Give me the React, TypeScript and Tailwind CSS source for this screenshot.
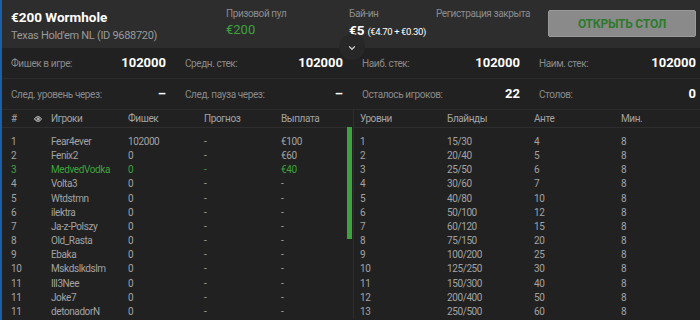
import React from 'react';
import { ChevronDown, Eye } from 'lucide-react';

const stats = [
  [
    ['Фишек в игре:', '102000'],
    ['Средн. стек:', '102000'],
    ['Наиб. стек:', '102000'],
    ['Наим. стек:', '102000'],
  ],
  [
    ['След. уровень через:', '–'],
    ['След. пауза через:', '–'],
    ['Осталось игроков:', '22'],
    ['Столов:', '0'],
  ],
];

const players = [
  ['1', 'Fear4ever', '102000', '-', '€100'],
  ['2', 'Fenix2', '0', '-', '€60'],
  ['3', 'MedvedVodka', '0', '-', '€40'],
  ['4', 'Volta3', '0', '-', '-'],
  ['5', 'Wtdstmn', '0', '-', '-'],
  ['6', 'ilektra', '0', '-', '-'],
  ['7', 'Ja-z-Polszy', '0', '-', '-'],
  ['8', 'Old_Rasta', '0', '-', '-'],
  ['9', 'Ebaka', '0', '-', '-'],
  ['10', 'Mskdslkdslm', '0', '-', '-'],
  ['11', 'Ill3Nee', '0', '-', '-'],
  ['11', 'Joke7', '0', '-', '-'],
  ['11', 'detonadorN', '0', '-', '-'],
];

const levels = [
  ['1', '15/30', '4'],
  ['2', '20/40', '5'],
  ['3', '25/50', '6'],
  ['4', '30/60', '7'],
  ['5', '40/80', '10'],
  ['6', '50/100', '12'],
  ['7', '60/120', '15'],
  ['8', '75/150', '20'],
  ['9', '100/200', '25'],
  ['10', '125/250', '30'],
  ['11', '150/300', '40'],
  ['12', '200/400', '50'],
  ['13', '250/500', '60'],
];

export default function App() {
  return (
    <div
      className="relative w-[700px] h-[320px] overflow-hidden bg-[#212121] border-l-2 border-[#1d5fa6]"
      style={{ fontFamily: 'Roboto, "Liberation Sans", sans-serif' }}
    >
      {/* header */}
      <div className="flex h-[48px] bg-[#2d2d2d] whitespace-nowrap">
        <div className="w-[224px] pl-[9px] pt-[9px]">
          <div className="text-[13.5px] font-bold text-white leading-[16px]">€200 Wormhole</div>
          <div className="text-[11px] tracking-[-0.3px] text-[#9a9a9a] leading-[14px] mt-[4px]">Texas Hold'em NL (ID 9688720)</div>
        </div>
        <div className="w-[123px] pt-[8px]">
          <div className="text-[10px] tracking-[-0.4px] text-[#8c8c8c] leading-[12px]">Призовой пул</div>
          <div className="text-[13px] text-[#3ea33e] leading-[16px] mt-[2px]">€200</div>
        </div>
        <div className="w-[87px] pt-[8px]">
          <div className="text-[10px] tracking-[-0.4px] text-[#8c8c8c] leading-[12px]">Бай-ин</div>
          <div className="leading-[16px] mt-[2px] text-white">
            <span className="text-[13.5px] font-bold">€5</span>
            <span className="text-[9.5px] ml-[3px] tracking-[-0.4px]">(€4.70 + €0.30)</span>
          </div>
        </div>
        <div className="w-[112px] pt-[8px]">
          <div className="text-[10px] tracking-[-0.4px] text-[#8c8c8c] leading-[12px]">Регистрация закрыта</div>
        </div>
        <div className="pt-[10px]">
          <button className="w-[148px] h-[27px] rounded-[2px] bg-[#8a8a8a] border border-[#9a9a9a] text-[12px] tracking-[-0.2px] font-bold text-[#2c7a2e]">
            ОТКРЫТЬ СТОЛ
          </button>
        </div>
      </div>

      {/* stats */}
      {stats.map((row, i) => (
        <div key={i} className="grid grid-cols-[174px_177px_177px_1fr] h-[31px] border-b border-[#2c2c2c] items-center">
          {row.map(([label, value], j) => (
            <div key={j} className={`flex items-center justify-between pl-[9px] ${j === 3 ? 'pr-[4px]' : 'pr-[10px]'}`}>
              <span className="text-[10px] tracking-[-0.4px] text-[#8a8a8a]">{label}</span>
              <span className="text-[13px] font-bold text-white">{value}</span>
            </div>
          ))}
        </div>
      ))}

      {/* tables */}
      <div className="flex">
        <div className="w-[345px] relative">
          <div className="grid grid-cols-[40px_77px_76px_77px_1fr] pl-[9px] h-[18px] items-center border-b border-[#2e2e2e] text-[10px] tracking-[-0.4px] text-[#a3a3a3]">
            <div className="flex items-center">
              <span>#</span>
              <Eye className="w-[8px] h-[8px] ml-auto mr-[9px] text-[#cfcfcf]" strokeWidth={3} />
            </div>
            <div>Игроки</div>
            <div>Фишек</div>
            <div>Прогноз</div>
            <div>Выплата</div>
          </div>
          <div className="pt-[6px]">
            {players.map((p, i) => (
              <div
                key={i}
                className={`grid grid-cols-[40px_77px_76px_77px_1fr] pl-[9px] h-[14.17px] items-center text-[10px] tracking-[-0.4px] ${
                  i === 2 ? 'text-[#3ea33e]' : 'text-[#a3a3a3]'
                }`}
              >
                {p.map((c, j) => (
                  <div key={j}>{c}</div>
                ))}
              </div>
            ))}
          </div>
          <div className="absolute left-[345px] top-[17px] w-[5px] h-[112px] bg-[#3aa53a]" />
        </div>
        <div className="w-[6px]" />
        <div className="flex-1 border-l border-[#2e2e2e]">
          <div className="grid grid-cols-[87px_87px_87px_1fr] pl-[6px] h-[18px] items-center border-b border-[#2e2e2e] text-[10px] tracking-[-0.4px] text-[#a3a3a3]">
            <div>Уровни</div>
            <div>Блайнды</div>
            <div>Анте</div>
            <div>Мин.</div>
          </div>
          <div className="pt-[6px]">
            {levels.map((l, i) => (
              <div key={i} className="grid grid-cols-[87px_87px_87px_1fr] pl-[6px] h-[14.17px] items-center text-[10px] tracking-[-0.4px] text-[#a3a3a3]">
                <div>{l[0]}</div>
                <div>{l[1]}</div>
                <div>{l[2]}</div>
                <div>8</div>
              </div>
            ))}
          </div>
        </div>
      </div>

      {/* collapse toggle */}
      <div className="absolute left-[337px] top-[34px] w-[26px] h-[26px] rounded-full bg-[#272727] flex items-center justify-center">
        <ChevronDown className="w-[10px] h-[10px] text-[#c8c8c8] mt-[2px]" strokeWidth={3} />
      </div>
    </div>
  );
}
